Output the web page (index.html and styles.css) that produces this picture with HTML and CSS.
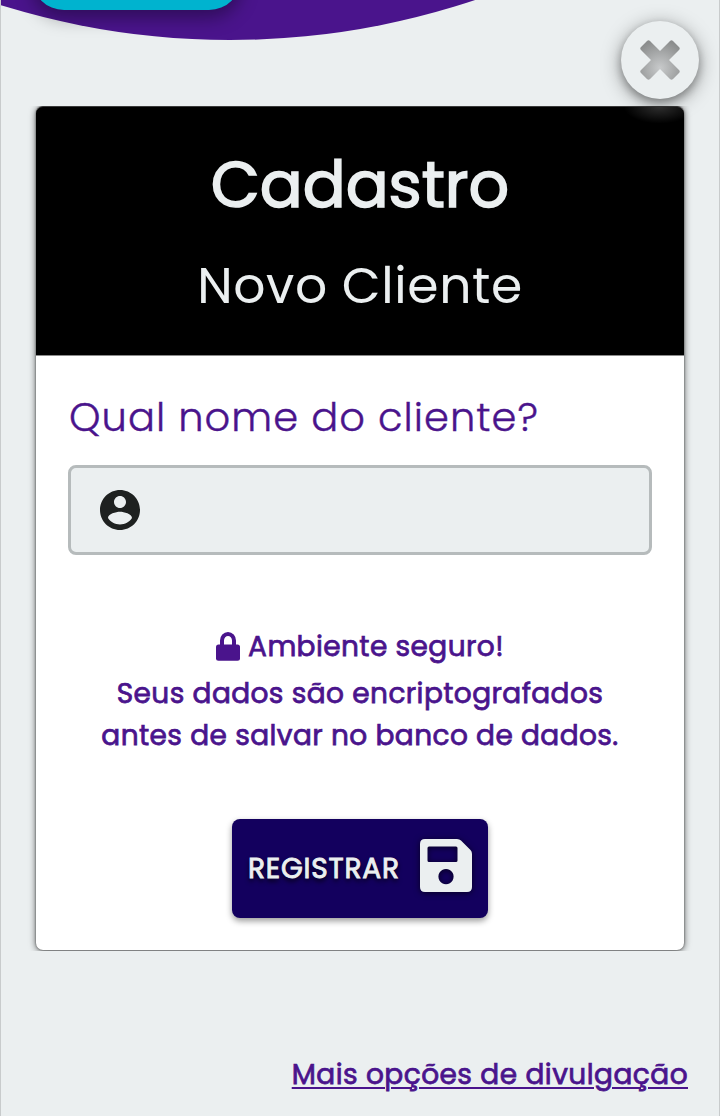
FILE: index.html
```html
<!DOCTYPE html>
<html lang="pt-BR">
<head>
<meta charset="utf-8">
<title>Cadastro</title>
<link rel="stylesheet" href="styles.css">
</head>
<body>
<div class="page">
  <div class="decor"><div class="curve"></div><div class="pill"></div></div>
  <button class="close" aria-label="Fechar">
    <svg width="40" height="40" viewBox="0 0 40 40">
      <defs><radialGradient id="xg" gradientUnits="userSpaceOnUse" cx="20" cy="28" r="28"><stop offset="0" stop-color="#c8cacb"/><stop offset="1" stop-color="#8b8d8d"/></radialGradient></defs>
      <path fill="url(#xg)" d="M7 1Q8.500-.5 10 1L20 11 30 1Q31.500-.5 33 1L39 7Q40.500 8.500 39 10L29 20 39 30Q40.500 31.500 39 33L33 39Q31.500 40.500 30 39L20 29 10 39Q8.500 40.500 7 39L1 33Q-.5 31.500 1 30L11 20 1 10Q-.5 8.500 1 7Z"/>
    </svg>
  </button>
  <div class="card-clip">
    <main class="card">
      <header class="card-head">
        <h1 class="title">Cadastro</h1>
        <h2 class="subtitle">Novo Cliente</h2>
      </header>
      <form class="form">
        <label class="label" for="nome">Qual nome do cliente?</label>
        <div class="field">
          <svg class="user" width="40" height="40" viewBox="2 2 20 20"><path fill="#1e2120" d="M12 2C6.480 2 2 6.480 2 12s4.480 10 10 10 10-4.480 10-10S17.520 2 12 2zm0 3c1.660 0 3 1.340 3 3s-1.340 3-3 3-3-1.340-3-3 1.340-3 3-3zm0 14.200c-2.500 0-4.710-1.280-6-3.220.03-1.990 4-3.080 6-3.080 1.990 0 5.970 1.090 6 3.080-1.290 1.940-3.500 3.220-6 3.220z"/></svg>
          <input class="input" id="nome" type="text">
        </div>
        <p class="safe">
          <svg class="lock" width="24" height="29" viewBox="0 0 24 29"><path fill="none" stroke="#4a148c" stroke-width="4" d="M6 14V8.500a6 6.500 0 0 1 12 0V14"/><rect y="12.500" width="24" height="16.300" rx="2.500" fill="#4a148c"/></svg>
          <span>Ambiente seguro!</span>
        </p>
        <p class="note">Seus dados são encriptografados<br>antes de salvar no banco de dados.</p>
        <button class="submit" type="button">
          <span class="submit-text">REGISTRAR</span>
          <svg class="disk" width="52" height="53" viewBox="0 0 52 53"><path fill="#ebeff0" fill-rule="evenodd" d="M5 0H37Q39.500 0 41 1.500L50.500 11Q52 12.500 52 15V48Q52 53 47 53H5Q0 53 0 48V5Q0 0 5 0ZM9 7.500Q7.500 7.500 7.500 9V21.500Q7.500 23 9 23H36Q37.500 23 37.500 21.500V9Q37.500 7.500 36 7.500ZM26 30a7.600 7.600 0 1 0 .01 0Z"/></svg>
        </button>
      </form>
    </main>
  </div>
  <footer class="footer"><a class="more" href="#">Mais opções de divulgação</a></footer>
</div>
</body>
</html>
```
FILE: styles.css
```css
* { box-sizing: border-box; }
body { margin: 0; font-family: Poppins, Inter, "Open Sans", sans-serif; color: #4a148c; }
h1, h2, p { margin: 0; }
.page { position: relative; width: 720px; height: 1116px; overflow: hidden; background: #ebeff0; border: solid #c8cbcc; border-width: 0 1px; padding-top: 106px; }
.decor { position: absolute; top: 0; left: -1px; width: 720px; height: 100px; overflow: hidden; }
.curve { position: absolute; left: -541px; top: -1502px; width: 1542px; height: 1542px; border-radius: 50%; background: #4a148c; }
.pill { position: absolute; left: 32px; top: -54px; width: 209px; height: 64px; border-radius: 32px; background: #00b3cf; box-shadow: 0 8px 18px rgba(0,0,0,.36); }
.close { position: absolute; z-index: 2; top: 21px; left: 620px; width: 78px; height: 78px; padding: 0; border: 0; border-radius: 50%; background: #ebeff0; display: grid; place-items: center; box-shadow: 0 4px 20px rgba(0,0,0,.38), 0 4px 8px rgba(0,0,0,.28); }
.close::after { content: ""; position: absolute; top: 86px; left: 0; width: 64px; height: 18px; background: radial-gradient(ellipse at 60% 0, rgba(255,255,255,.18), transparent 65%); }
.card-clip { padding: 0 35px; height: 845px; overflow: hidden; }
.card { height: 844px; border-radius: 7px; background: #fff; box-shadow: 0 1px 7px rgba(0,0,0,.65), 0 0 2px rgba(0,0,0,.55); }
.card-head { height: 250px; padding-top: 30px; text-align: center; background: #000; color: #ebeff0; border-top: 1px solid #3a3a3a; border-bottom: 1px solid #8b8b8b; border-radius: 7px 7px 0 0; }
.title { font-size: 63.500px; line-height: 96px; font-weight: 400; -webkit-text-stroke: 1.600px #ebeff0; }
.subtitle { font-size: 50.400px; line-height: 76px; font-weight: 400; letter-spacing: .6px; margin-top: 15px; }
.form { display: flex; flex-direction: column; padding: 30px 32px 0; }
.label { font-size: 40px; line-height: 62px; font-weight: 300; letter-spacing: 1.050px; padding-left: 1px; white-space: nowrap; -webkit-text-stroke: .4px #4a148c; }
.field { display: flex; align-items: center; height: 90px; margin-top: 17px; padding: 0 29px; background: #ebeff0; border: 3px solid #b6bbbc; border-radius: 8px; }
.user { flex: none; }
.input { flex: 1; border: 0; background: transparent; font: inherit; outline: 0; }
.safe { display: flex; justify-content: center; align-items: center; gap: 8px; height: 44px; margin-top: 70px; font-size: 28px; letter-spacing: .4px; white-space: nowrap; -webkit-text-stroke: .75px #4a148c; }
.lock { margin-bottom: 2px; }
.note { margin-top: 4px; font-size: 28px; line-height: 42px; letter-spacing: .4px; text-align: center; white-space: nowrap; -webkit-text-stroke: .75px #4a148c; }
.submit { align-self: center; display: flex; align-items: center; justify-content: space-between; width: 256px; height: 99px; margin-top: 62px; padding: 0 16px; border: 0; border-radius: 8px; background: #13005e; color: #ebeff0; font-family: inherit; box-shadow: 0 3px 6px rgba(0,0,0,.4); }
.submit-text { font-size: 28px; letter-spacing: .8px; -webkit-text-stroke: .9px #ebeff0; text-shadow: 0 3px 5px #000; }
.disk { position: relative; top: -3px; filter: drop-shadow(0 1px 3px rgba(0,0,0,.65)); }
.footer { display: flex; justify-content: flex-end; padding: 102px 31px 0; }
.more { font-size: 28px; letter-spacing: .45px; line-height: 44px; color: #4a148c; -webkit-text-stroke: .75px #4a148c; text-decoration-thickness: 2px; text-underline-offset: 3px; white-space: nowrap; }
```
